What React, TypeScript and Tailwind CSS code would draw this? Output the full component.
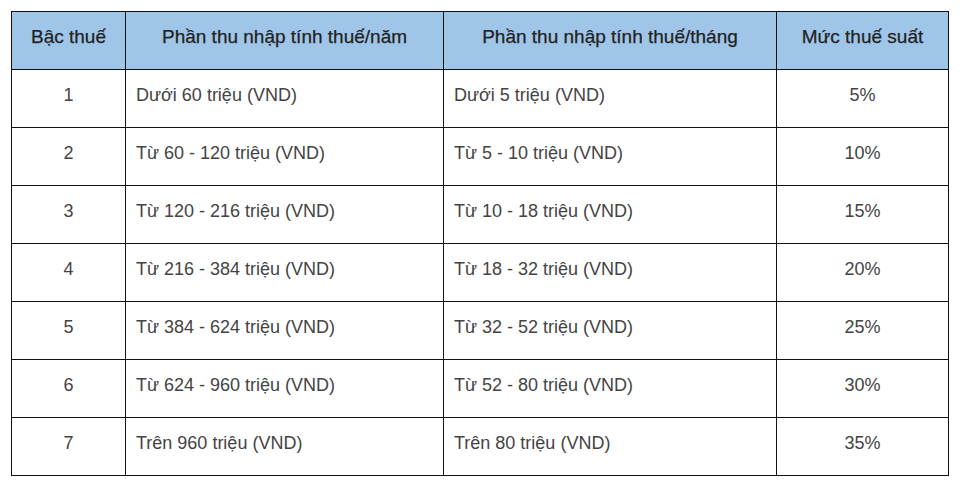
import React from "react";

const rows: [string, string, string, string][] = [
  ["1", "Dưới 60 triệu (VND)", "Dưới 5 triệu (VND)", "5%"],
  ["2", "Từ 60 - 120 triệu (VND)", "Từ 5 - 10 triệu (VND)", "10%"],
  ["3", "Từ 120 - 216 triệu (VND)", "Từ 10 - 18 triệu (VND)", "15%"],
  ["4", "Từ 216 - 384 triệu (VND)", "Từ 18 - 32 triệu (VND)", "20%"],
  ["5", "Từ 384 - 624 triệu (VND)", "Từ 32 - 52 triệu (VND)", "25%"],
  ["6", "Từ 624 - 960 triệu (VND)", "Từ 52 - 80 triệu (VND)", "30%"],
  ["7", "Trên 960 triệu (VND)", "Trên 80 triệu (VND)", "35%"],
];

const th =
  "border border-[#111] font-normal text-center align-top pt-[11px] pb-[19px] px-[6px] text-[19px] leading-[27px] [-webkit-text-stroke:0.25px_#222]";
const td = "border border-[#111] align-top pt-[12px] pb-[18px] px-[10px]";

export default function App() {
  return (
    <div
      className="w-[962px] h-[487px] bg-white pt-[11px] pl-[11px]"
      style={{ fontFamily: '"Liberation Sans", Arial, sans-serif' }}
    >
      <table className="border-collapse table-fixed w-[937px] text-[18px] leading-[27px]">
        <colgroup>
          <col className="w-[114px]" />
          <col className="w-[318px]" />
          <col className="w-[333px]" />
          <col className="w-[172px]" />
        </colgroup>
        <thead>
          <tr className="h-[58px] bg-[#9fc5e8] text-[#222]">
            <th className={th}>Bậc thuế</th>
            <th className={th}>Phần thu nhập tính thuế/năm</th>
            <th className={th}>Phần thu nhập tính thuế/tháng</th>
            <th className={th}>Mức thuế suất</th>
          </tr>
        </thead>
        <tbody className="text-[#444]">
          {rows.map((r) => (
            <tr key={r[0]} className="h-[58px]">
              <td className={`${td} text-center`}>{r[0]}</td>
              <td className={`${td} text-left`}>{r[1]}</td>
              <td className={`${td} text-left`}>{r[2]}</td>
              <td className={`${td} text-center`}>{r[3]}</td>
            </tr>
          ))}
        </tbody>
      </table>
    </div>
  );
}
